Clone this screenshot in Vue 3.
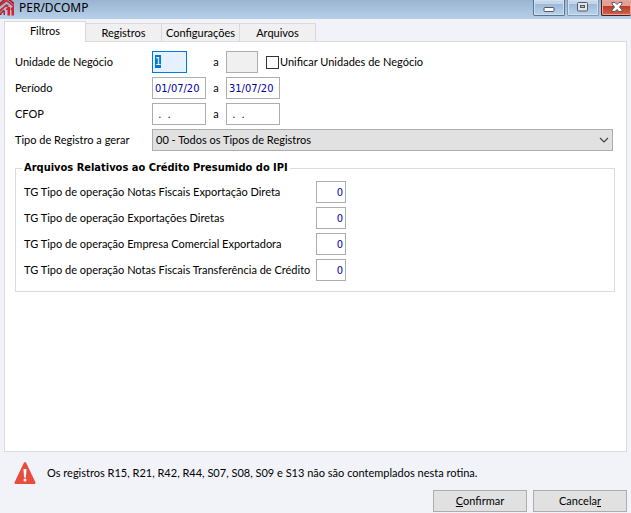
<script setup>
import { onMounted, ref } from 'vue'

const tabs = ['Filtros', 'Registros', 'Configurações', 'Arquivos']
const activeTab = ref('Filtros')

const unitFrom = ref('1')
const unitTo = ref('')
const unify = ref(false)
const periodFrom = ref('01/07/20')
const periodTo = ref('31/07/20')
const cfopFrom = ref(' .  .')
const cfopTo = ref(' .  .')
const recordType = ref('00')

const operations = ref([
  { id: 'op-direct-notes', label: 'TG Tipo de operação Notas Fiscais Exportação Direta', value: '0' },
  { id: 'op-direct', label: 'TG Tipo de operação Exportações Diretas', value: '0' },
  { id: 'op-trading', label: 'TG Tipo de operação Empresa Comercial Exportadora', value: '0' },
  { id: 'op-transfer', label: 'TG Tipo de operação Notas Fiscais Transferência de Crédito', value: '0' },
])

const firstField = ref(null)
onMounted(() => {
  firstField.value.focus()
  firstField.value.select()
})
</script>

<template>
  <div class="window">
    <header class="titlebar">
      <svg class="logo" viewBox="0 0 14 16" aria-hidden="true">
        <path d="M0 2.500 3 0H5.500L0 5ZM8 0H11L14 2.500V5Z" fill="#b3202a" />
        <path d="M0 6.500 6.500 1.500 14 7.500V5.500L7 0H6L0 4.500Z" fill="#c9252c" />
        <path d="M0 9.500 6.500 4 9 6 7 7.500 6 6.500 0 12Z" fill="#c9252c" />
        <path d="M0 13 3.500 9.500 5 11V15H3.500V12L1.500 13.500V15H0Z" fill="#b3202a" />
        <path d="M6 9 8 7H10V15.500H7.500V10H6ZM10.500 9 12 7H14V15.500H11.500V10H10.500Z" fill="#d81f2a" />
      </svg>
      <h1 class="title">PER/DCOMP</h1>
      <div class="controls">
        <button type="button" class="control" aria-label="Minimizar">
          <svg viewBox="0 0 12 10"><rect x="1" y="5.500" width="10" height="4" rx="1" fill="#fff" stroke="#535666" /></svg>
        </button>
        <button type="button" class="control control-dim" aria-label="Maximizar">
          <svg viewBox="0 0 12 10">
            <rect x=".5" y=".5" width="10" height="8.500" rx="1" fill="#e4e4e6" stroke="#535666" />
            <rect x="3.500" y="3.500" width="4" height="2" fill="#9fc0e0" stroke="#535666" />
          </svg>
        </button>
        <button type="button" class="control control-close" aria-label="Fechar">
          <svg viewBox="0 0 12 10">
            <path d="M1 .5H4L6 2.500 8 .5H11V2L8.500 5 11 8V9.500H8L6 7.500 4 9.500H1V8L3.500 5 1 2Z" fill="#fff" stroke="#535666" />
          </svg>
        </button>
      </div>
    </header>

    <main class="content">
      <div class="tabs" role="tablist">
        <button
          v-for="tab in tabs"
          :key="tab"
          type="button"
          role="tab"
          class="tab"
          :class="{ active: tab === activeTab }"
          :aria-selected="tab === activeTab"
          @click="activeTab = tab"
        >{{ tab }}</button>
      </div>

      <section class="panel" role="tabpanel">
        <div class="row">
          <label for="unit-from">Unidade de Negócio</label>
          <div class="fields">
            <div class="slot"><input id="unit-from" ref="firstField" v-model="unitFrom" class="box unit" /></div>
            <label class="to" for="unit-to">a</label>
            <input id="unit-to" v-model="unitTo" class="box unit-end" disabled />
            <label class="check"><input v-model="unify" type="checkbox" />Unificar Unidades de Negócio</label>
          </div>
        </div>
        <div class="row">
          <label for="period-from">Período</label>
          <div class="fields">
            <input id="period-from" v-model="periodFrom" class="box" />
            <label class="to" for="period-to">a</label>
            <input id="period-to" v-model="periodTo" class="box" />
          </div>
        </div>
        <div class="row">
          <label for="cfop-from">CFOP</label>
          <div class="fields">
            <input id="cfop-from" v-model="cfopFrom" class="box" />
            <label class="to" for="cfop-to">a</label>
            <input id="cfop-to" v-model="cfopTo" class="box" />
          </div>
        </div>
        <div class="row">
          <label for="record-type">Tipo de Registro a gerar</label>
          <div class="select">
            <select id="record-type" v-model="recordType">
              <option value="00">00 - Todos os Tipos de Registros</option>
            </select>
            <svg class="chevron" viewBox="0 0 10 6" aria-hidden="true">
              <path d="M1 1 5 5 9 1" fill="none" stroke="#444" stroke-width="1.200" />
            </svg>
          </div>
        </div>

        <fieldset class="group">
          <legend>Arquivos Relativos ao Crédito Presumido do IPI</legend>
          <div v-for="op in operations" :key="op.id" class="operation">
            <label :for="op.id">{{ op.label }}</label>
            <input :id="op.id" v-model="op.value" class="box number" />
          </div>
        </fieldset>
      </section>

      <p class="notice">
        <svg class="warning" viewBox="0 0 22 22" aria-hidden="true">
          <path d="M10 .5Q11 -.5 12 .5L21.500 20.500Q21.500 22 20.500 22H1.500Q.5 22 .5 20.500Z" fill="#e84c3d" />
          <path d="M9.500 7H12.500L12 15.500H10Z" fill="#fff" />
          <circle cx="11" cy="18" r="1.500" fill="#fff" />
        </svg>
        <span>Os registros R15, R21, R42, R44, S07, S08, S09 e S13 não são contemplados nesta rotina.</span>
      </p>
    </main>

    <footer class="actions">
      <button type="button" class="action"><u>C</u>onfirmar</button>
      <button type="button" class="action">Cancela<u>r</u></button>
    </footer>
  </div>
</template>

<style>
body {
  margin: 0;
  background: #f2f3f9;
}
</style>

<style scoped>
.window {
  display: flex;
  flex-direction: column;
  min-height: 100vh;
  box-sizing: border-box;
  background: #f2f3f9;
  color: #000;
  font: 11px/14px Lato, sans-serif;
}

.window * {
  box-sizing: border-box;
}

button,
input,
select {
  margin: 0;
  border-radius: 0;
  font: inherit;
  color: inherit;
}

.titlebar {
  display: flex;
  align-items: flex-start;
  height: 19px;
  background: linear-gradient(#99b4d1, #b7d0ea);
}

.logo {
  width: 14px;
  height: 16px;
}

.title {
  flex: 1;
  margin: 0 0 0 5px;
  font: 12px/16px "Noto Sans", sans-serif;
}

.controls {
  display: flex;
  gap: 2px;
}

.control {
  display: flex;
  align-items: center;
  justify-content: center;
  width: 32px;
  height: 16px;
  padding: 0 0 2px;
  border: 1px solid #5f7186;
  border-top: 0;
  border-radius: 0 0 2px 2px;
  background: linear-gradient(#c3d6ea 30%, #9fbad6 30%, #b9d3ee);
  box-shadow: inset 0 0 0 1px #cfe0f2;
}

.control svg {
  flex: none;
  width: 12px;
  height: 10px;
}

.control-dim {
  border-color: #8298b3;
}

.control-close {
  width: 30px;
  border-color: #4c1a1c;
  border-right: 0;
  background: linear-gradient(#e3a196 40%, #bd3a25 40%, #d3644c);
  box-shadow: inset 0 0 0 1px #e6a79c;
}

.content {
  display: flex;
  flex: 1;
  flex-direction: column;
  padding: 2px 4px 0;
}

.tabs {
  display: flex;
  align-items: flex-end;
  height: 20px;
}

.tab {
  flex: 0 0 auto;
  min-width: 77px;
  height: 18px;
  margin-left: -1px;
  padding: 0 4px;
  border: 1px solid #d9d9d9;
  border-bottom: 0;
  background: #f0f0f0;
}

.tab.active {
  z-index: 1;
  min-width: 82px;
  height: 21px;
  margin: 0 0 -1px;
  padding-bottom: 2px;
  background: #fff;
}

.panel {
  flex: 1;
  padding: 9px 10px;
  border: 1px solid #dcdcdc;
  background: #fff;
}

.row {
  display: grid;
  grid-template-columns: 137px 1fr;
  align-items: center;
  height: 22px;
  margin-right: 3px;
  margin-bottom: 4px;
}

.fields {
  display: flex;
  align-items: center;
}

.slot,
.box {
  width: 54px;
}

.box {
  height: 22px;
  padding: 1px 2px 0;
  border: 1px solid #abadb3;
  outline: 0;
  background: #fff;
  color: #0000a0;
  font-family: "DejaVu Sans Condensed", sans-serif;
}

.box:focus {
  padding: 0 2px 2px;
  border-color: #0078d7;
  background: #e5f1ff;
}

.box::selection {
  background: #0078d7;
  color: #fff;
}

.box:disabled {
  background: #f0f0f0;
}

.unit {
  width: 35px;
}

.unit-end {
  width: 32px;
}

.to {
  width: 20px;
  text-align: center;
}

.check {
  display: flex;
  align-items: center;
  gap: 1px;
  margin-left: 8px;
}

.check input {
  width: 13px;
  height: 13px;
  appearance: none;
  border: 1px solid #333;
  background: #fff;
}

.check input:checked {
  background: #333;
}

.select {
  display: grid;
  align-items: center;
}

.select select,
.chevron {
  grid-area: 1 / 1;
}

.select select {
  width: 100%;
  height: 22px;
  padding: 0 20px 0 3px;
  appearance: none;
  border: 1px solid #adadad;
  outline: 0;
  background: #e1e1e1;
}

.chevron {
  justify-self: end;
  width: 10px;
  height: 6px;
  margin-right: 4px;
  pointer-events: none;
}

.group {
  display: grid;
  gap: 4px;
  min-width: 0;
  margin: 10px 1px 0 0;
  padding: 6px 8px 10px;
  border: 1px solid #dcdcdc;
}

.group legend {
  margin-left: -2px;
  padding: 0 2px;
  font-family: "DejaVu Sans Condensed", sans-serif;
  font-weight: bold;
}

.operation {
  display: grid;
  grid-template-columns: 292px 30px;
  align-items: center;
  white-space: nowrap;
}

.number {
  width: 30px;
  text-align: right;
}

.notice {
  display: flex;
  align-items: center;
  gap: 11px;
  height: 38px;
  margin: 0;
  padding: 4px 10px 0;
}

.warning {
  flex: none;
  width: 22px;
  height: 22px;
}

.actions {
  display: flex;
  justify-content: flex-end;
  gap: 6px;
  padding: 0 4px 1px;
}

.action {
  width: 94px;
  height: 22px;
  padding: 0;
  border: 1px solid #adadad;
  background: #e1e1e1;
}
</style>
